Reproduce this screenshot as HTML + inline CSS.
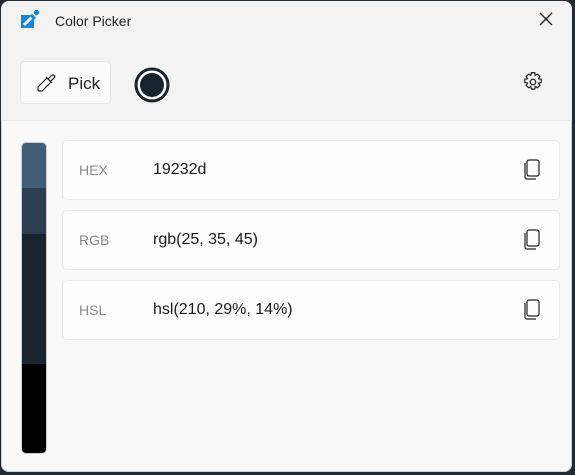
<!DOCTYPE html>
<html><head><style>
body{margin:0;width:575px;height:475px;background:#1f2a33;font-family:"Liberation Sans",sans-serif;position:relative;overflow:hidden}
.win{position:absolute;left:1px;top:1px;width:571px;height:471px;background:#f9f9f9;border-radius:8px;overflow:hidden;box-shadow:0 0 0 1px #d0d0d0 inset}
.top{position:absolute;left:0;top:0;width:100%;height:119px;background:#f3f3f3;border-bottom:1px solid #e5e5e5}
.title{position:absolute;left:54px;top:12px;font-size:14px;color:#222}
.pick{position:absolute;left:19px;top:60px;width:91px;height:43px;background:#fbfbfb;border:1px solid #e5e5e5;border-radius:5px;box-sizing:border-box}
.pick span{position:absolute;left:47px;top:12px;font-size:17px;color:#222}
.strip{position:absolute;left:20px;top:141px;width:26px;height:312px;border-radius:5px;overflow:hidden;border:1px solid #ccc;box-sizing:border-box}
.card{position:absolute;left:61px;width:498px;height:60px;background:#fdfdfd;border:1px solid #e8e8e8;border-radius:5px;box-sizing:border-box}
.lab{position:absolute;left:16px;top:21px;font-size:14px;color:#8a8a8a}
.val{position:absolute;left:90px;top:20px;font-size:16px;color:#1a1a1a}
.cp{position:absolute;left:460px;top:18px}
</style></head><body>
<div class="win">
<div class="top">
<svg style="position:absolute;left:19px;top:9px" width="20" height="20" viewBox="0 0 20 20"><rect x="1" y="5" width="13" height="13" fill="#1a84d8"/><path d="M4 15 L13 6" stroke="#fff" stroke-width="3"/><path d="M11 5 L15 9" stroke="#1a84d8" stroke-width="3"/><rect x="14" y="0" width="5" height="5" rx="2" fill="#1a84d8" transform="rotate(45 16.5 2.5)"/></svg>
<div class="title">Color Picker</div>
<svg style="position:absolute;left:537px;top:10px" width="16" height="16"><path d="M2 2L14 14M14 2L2 14" stroke="#222" stroke-width="1.4"/></svg>
<div class="pick"><svg style="position:absolute;left:15px;top:11px" width="20" height="20" viewBox="0 0 20 20" fill="none" stroke="#222" stroke-width="1.2"><path d="M11 5 L15 9 L6 18 L3 18 L2 17 L2 14 Z"/><path d="M10 4 L16 10"/><path d="M12 6 L15 3 Q17 1 18.5 2.5 Q19.5 4 17 6 L14 9"/></svg><span>Pick</span></div>
<svg style="position:absolute;left:133px;top:66px" width="36" height="36"><circle cx="18" cy="18" r="16" fill="#fff" stroke="#19232d" stroke-width="3"/><circle cx="18" cy="18" r="12" fill="#19232d"/></svg>
<svg style="position:absolute;left:521px;top:70px" width="22" height="22" viewBox="0 0 20 20" fill="none" stroke="#222" stroke-width="1.1"><path d="M8.5 1.5h3l.5 2.5 2-1.2 2.2 2.1-1.2 2.1 2.5.5v3l-2.5.5 1.2 2.1-2.2 2.1-2-1.2-.5 2.5h-3l-.5-2.5-2 1.2-2.2-2.1 1.2-2.1-2.5-.5v-3l2.5-.5-1.2-2.1 2.2-2.1 2 1.2z"/><circle cx="10" cy="10" r="2.5"/></svg>
</div>
<div class="strip"><div style="height:45px;background:#435d78"></div><div style="height:46px;background:#2c3e50"></div><div style="height:130px;background:#19232d"></div><div style="height:91px;background:#000"></div></div>
<div class="card" style="top:139px"><div class="lab">HEX</div><div class="val">19232d</div><svg class="cp" width="18" height="22" viewBox="0 0 18 22" fill="none" stroke="#222" stroke-width="1.2"><rect x="4" y="1" width="12" height="16" rx="2"/><path d="M2 4v14q0 2 2 2h9"/></svg></div>
<div class="card" style="top:209px"><div class="lab">RGB</div><div class="val">rgb(25, 35, 45)</div><svg class="cp" width="18" height="22" viewBox="0 0 18 22" fill="none" stroke="#222" stroke-width="1.2"><rect x="4" y="1" width="12" height="16" rx="2"/><path d="M2 4v14q0 2 2 2h9"/></svg></div>
<div class="card" style="top:279px"><div class="lab">HSL</div><div class="val">hsl(210, 29%, 14%)</div><svg class="cp" width="18" height="22" viewBox="0 0 18 22" fill="none" stroke="#222" stroke-width="1.2"><rect x="4" y="1" width="12" height="16" rx="2"/><path d="M2 4v14q0 2 2 2h9"/></svg></div>
</div>
</body></html>
